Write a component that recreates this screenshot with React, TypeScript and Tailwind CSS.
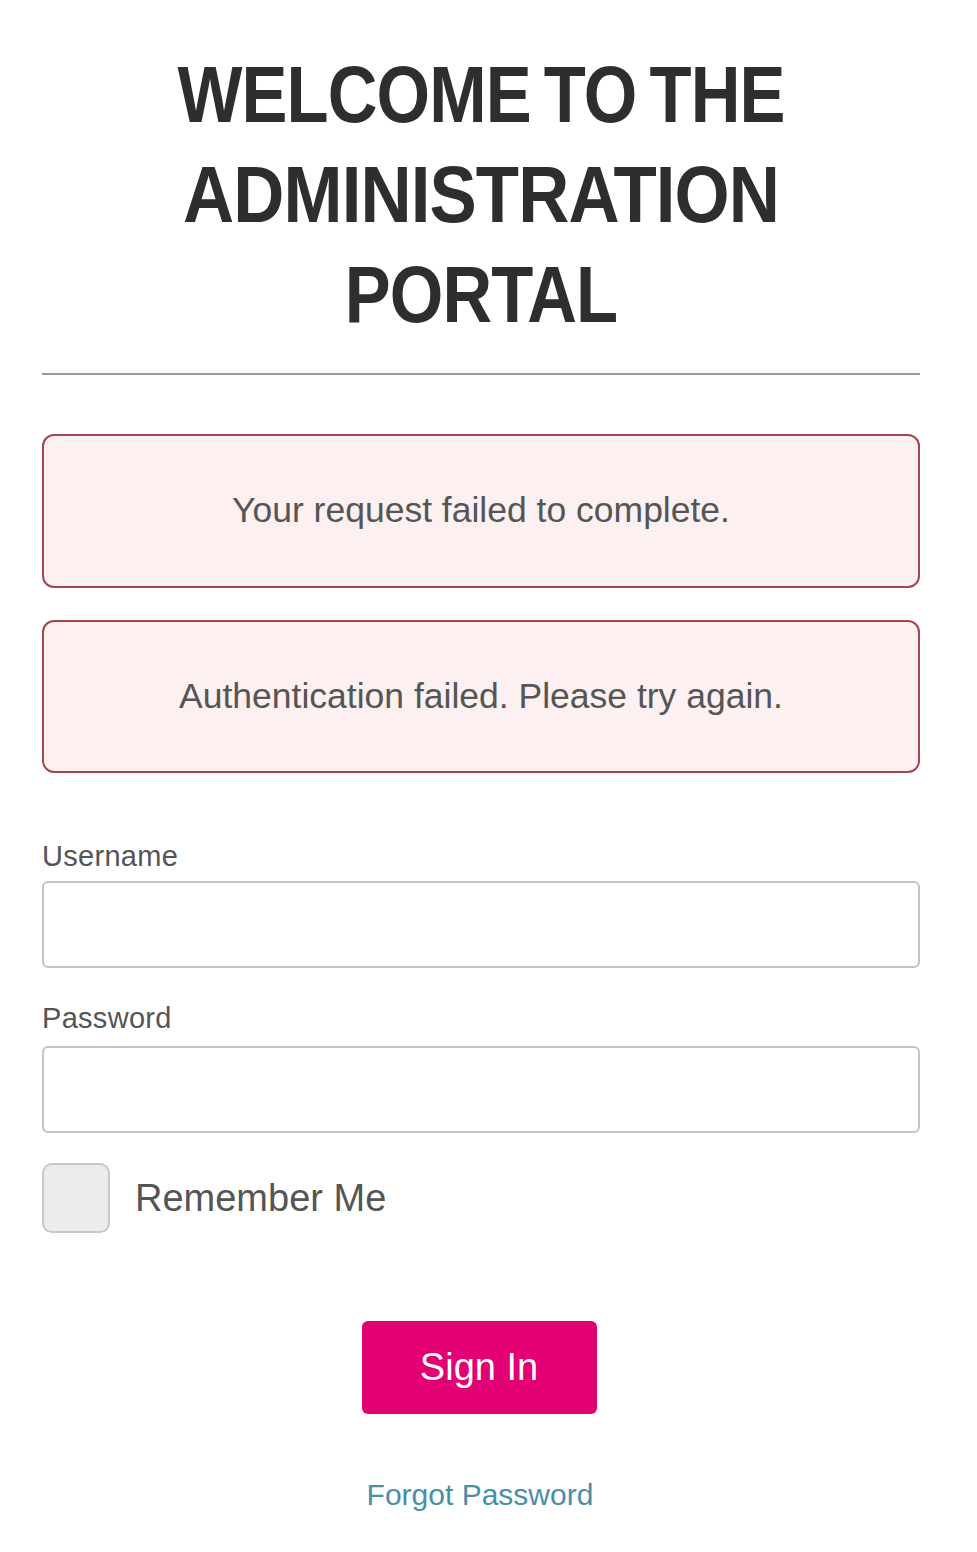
import React from "react";

export default function App() {
  return (
    <div className="w-[977px] min-h-[1552px] bg-white" style={{ fontFamily: '"Liberation Sans", Arial, sans-serif' }}>
      <div className="ml-[42px] w-[878px] flex flex-col">
        <h1 className="pt-[45px] text-center text-[80px] leading-[100px] font-bold text-[#2e2e2e] uppercase tracking-[-1px]">
          <div className="scale-x-[0.86] [word-spacing:-6px]">Welcome to the</div>
          <div className="scale-x-[0.885]">Administration</div>
          <div className="scale-x-[0.86]">Portal</div>
        </h1>
        <div className="mt-[28px] h-[2px] bg-[#9a9a9a]" />

        <div className="mt-[59px] h-[154px] rounded-[12px] border-2 border-[#a64452] bg-[#fcf0f0] flex items-center justify-center text-[35.5px] text-[#555]">
          Your request failed to complete.
        </div>
        <div className="mt-[32px] h-[153px] rounded-[12px] border-2 border-[#a64452] bg-[#fcf0f0] flex items-center justify-center text-[35.5px] text-[#555]">
          Authentication failed. Please try again.
        </div>

        <label className="mt-[66px] text-[29px] leading-[34px] tracking-[0.3px] text-[#555]">Username</label>
        <input className="mt-[8px] h-[87px] rounded-[6px] border-2 border-[#c4c4c4] bg-white" />

        <label className="mt-[33px] text-[29px] leading-[34px] tracking-[0.3px] text-[#555]">Password</label>
        <input type="password" className="mt-[11px] h-[87px] rounded-[6px] border-2 border-[#c4c4c4] bg-white" />

        <div className="mt-[30px] flex items-center gap-[25px]">
          <div className="w-[68px] h-[70px] rounded-[10px] border-2 border-[#c8c8c8] bg-[#ececec]" />
          <span className="text-[38px] text-[#555]">Remember Me</span>
        </div>

        <div className="mt-[88px] flex justify-center">
          <button className="mr-[4px] w-[235px] h-[93px] rounded-[6px] bg-[#e20074] text-white text-[38px]">Sign In</button>
        </div>

        <div className="mt-[63px] flex justify-center">
          <a className="mr-[2px] text-[30px] leading-[36px] text-[#4a8ea8]">Forgot Password</a>
        </div>
      </div>
    </div>
  );
}
